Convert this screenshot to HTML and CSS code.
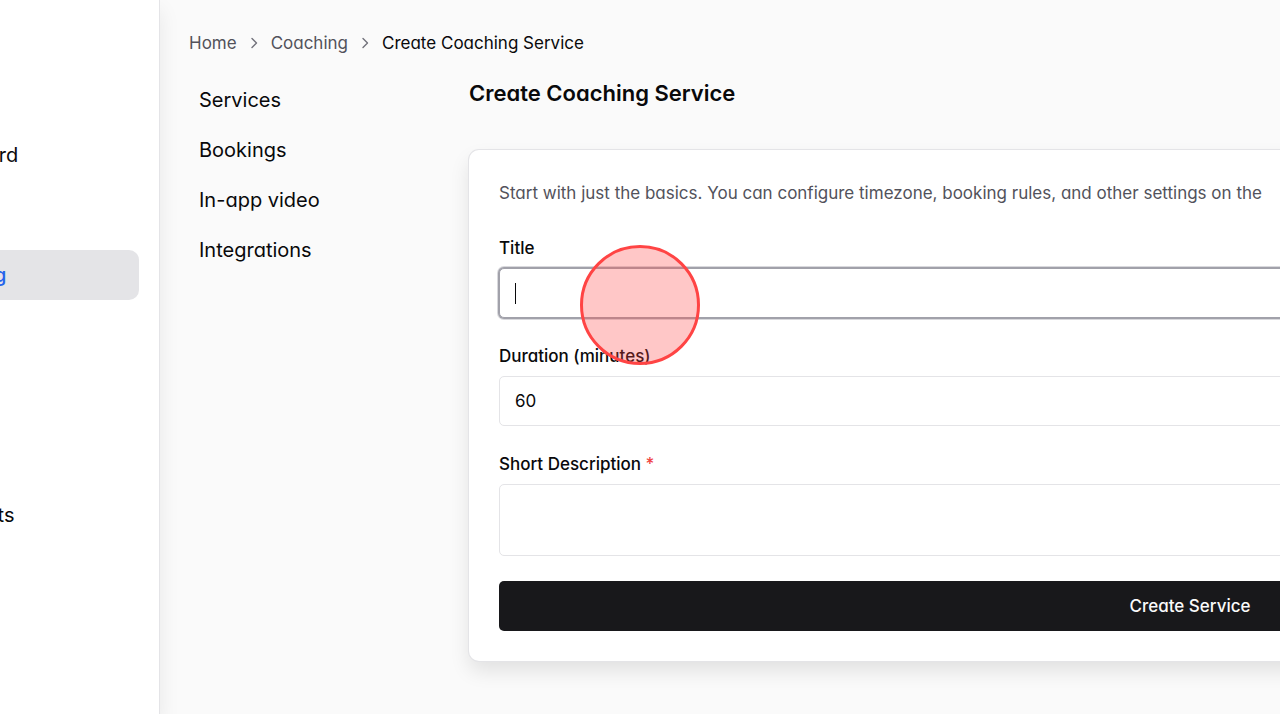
FILE: index.html
```html
<!DOCTYPE html>
<html lang="en">
<head>
  <meta charset="UTF-8" />
  <meta name="viewport" content="width=device-width, initial-scale=1.0"/>
  <title>Create Coaching Service</title>
  <link rel="stylesheet" href="styles.css">
</head>
<body>
  <div class="app">
    <aside class="sidebar">
      <nav class="side-nav" aria-label="Main">
        <a class="side-link" href="#">Dashboard</a>
        <a class="side-link active" href="#">Coaching</a>
        <a class="side-link last" href="#">Blog posts</a>
      </nav>
    </aside>

    <main class="main">
      <nav class="breadcrumb" aria-label="Breadcrumb">
        <a href="#">Home</a>
        <svg class="chevron" viewBox="0 0 12 12" aria-hidden="true"><path d="M4 1.5 8.5 6 4 10.5"/></svg>
        <a href="#">Coaching</a>
        <svg class="chevron" viewBox="0 0 12 12" aria-hidden="true"><path d="M4 1.5 8.5 6 4 10.5"/></svg>
        <span class="current">Create Coaching Service</span>
      </nav>

      <div class="columns">
        <nav class="sub-nav" aria-label="Coaching">
          <a href="#">Services</a>
          <a href="#">Bookings</a>
          <a href="#">In-app video</a>
          <a href="#">Integrations</a>
        </nav>

        <section class="content">
          <h1>Create Coaching Service</h1>

          <form class="card" id="serviceForm">
            <p class="intro">Start with just the basics. You can configure timezone, booking rules, and other settings on the</p>

            <div class="field">
              <label for="title">Title</label>
              <div class="title-box">
                <input type="text" id="title" class="focused"/>
                <span class="caret"></span>
                <span class="click-marker"></span>
              </div>
            </div>

            <div class="field">
              <label for="duration">Duration (minutes)</label>
              <input type="text" inputmode="numeric" id="duration" value="60"/>
            </div>

            <div class="field">
              <label for="description">Short Description <span class="required">*</span></label>
              <textarea id="description" required></textarea>
            </div>

            <button type="submit">Create Service</button>
          </form>
        </section>
      </div>
    </main>
  </div>
</body>
</html>
```
FILE: styles.css
```css
* {
  box-sizing: border-box;
}
body {
  margin: 0;
  overflow: hidden;
  font-family: Inter, "Liberation Sans", sans-serif;
  font-feature-settings: "cv11";
  font-optical-sizing: none;
  font-size: 17px;
  line-height: 26px;
  color: #09090b;
  background: #fafafa;
}
a {
  color: inherit;
  text-decoration: none;
}

/* the shell is wider than the window on both sides */
.app {
  display: flex;
  min-height: 100vh;
  margin-left: -160px;
  margin-right: -660px;
}

.sidebar {
  flex: none;
  width: 320px;
  padding: 130px 20px 20px;
  background: white;
  border-right: 1px solid #e4e4e7;
  box-shadow: 0 10px 20px rgba(0,0,0,0.08);
}
.side-nav {
  display: grid;
  grid-auto-rows: 50px;
  row-gap: 70px;
}
.side-link {
  display: flex;
  align-items: center;
  padding-left: 55px;
  border-radius: 10px;
  font-size: 20px;
  font-feature-settings: normal;
}
.side-link.active {
  background: #e4e4e7;
  color: #2563eb;
  font-weight: 500;
}
.side-link.last {
  grid-row: 4;
}

.main {
  flex: 1;
  padding: 30px 29px;
}
.breadcrumb {
  display: flex;
  align-items: center;
  gap: 11px;
  color: #52525b;
}
.breadcrumb .current {
  color: #09090b;
}
.chevron {
  width: 12px;
  height: 12px;
  fill: none;
  stroke: #71717a;
  stroke-width: 1.4;
  stroke-linecap: round;
  stroke-linejoin: round;
}

.columns {
  display: flex;
  gap: 30px;
  margin-top: 19px;
}
.sub-nav {
  flex: none;
  width: 250px;
}
.sub-nav a {
  display: block;
  padding: 10px;
  font-size: 20px;
  line-height: 30px;
}
.content {
  flex: 1;
}
h1 {
  margin: 0 0 39px;
  font-size: 22px;
  font-weight: 600;
  line-height: 36px;
}

.card {
  padding: 30px;
  background: white;
  border-radius: 10px;
  box-shadow: 0 0 0 1px #e4e4e7, 0 10px 20px rgba(0,0,0,0.1);
}
.intro {
  margin: 0 0 29px;
  color: #52525b;
}
.field {
  margin-bottom: 25px;
}
label {
  display: block;
  margin-bottom: 7px;
  font-weight: 500;
}
.required {
  color: #ef4444;
}
input, textarea {
  display: block;
  width: 100%;
  height: 50px;
  padding: 10px 15px;
  font: inherit;
  color: inherit;
  background: white;
  border: 1px solid #e4e4e7;
  border-radius: 5px;
}
textarea {
  height: 72px;
  resize: none;
}
input:focus, textarea:focus {
  outline: none;
}
input.focused {
  border-color: #a1a1aa;
  box-shadow: 0 0 0 1px #a1a1aa, 0 0 0 2px rgba(161,161,170,0.4);
}
button {
  display: block;
  width: 100%;
  height: 50px;
  font: inherit;
  font-weight: 500;
  color: #fafafa;
  background: #18181b;
  border: none;
  border-radius: 5px;
  cursor: pointer;
}

.title-box {
  position: relative;
}
.caret {
  position: absolute;
  top: 15px;
  left: 16px;
  width: 1px;
  height: 21px;
  background: #09090b;
}
/* highlights the spot that was clicked */
.click-marker {
  position: absolute;
  top: -23px;
  left: 81px;
  width: 120px;
  height: 120px;
  border: 3px solid #ff4444;
  border-radius: 50%;
  background: rgba(255,68,68,0.3);
  pointer-events: none;
}
```
